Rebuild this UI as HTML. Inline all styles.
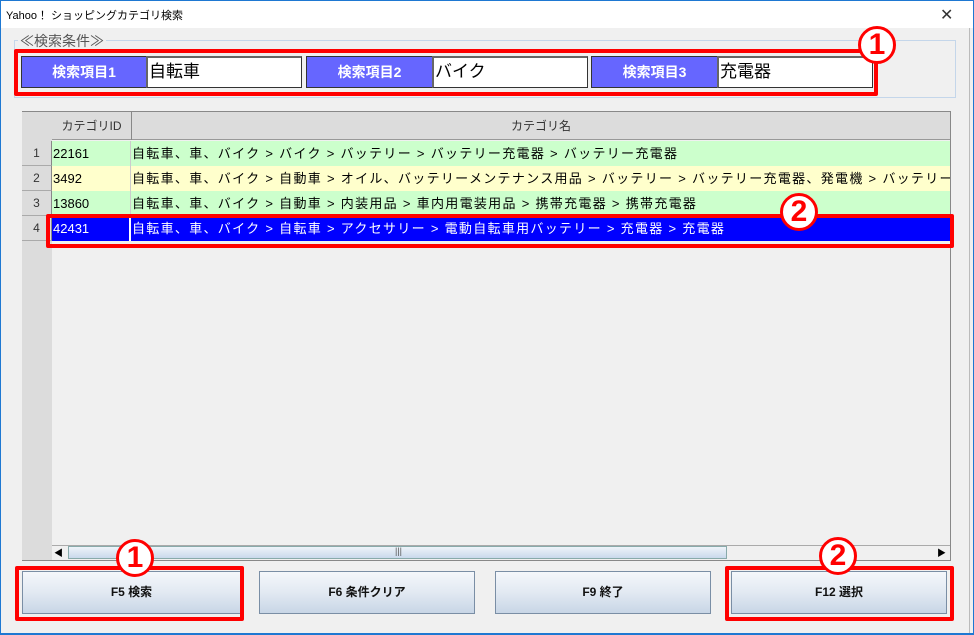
<!DOCTYPE html>
<html><head><meta charset="utf-8"><style>
*{margin:0;padding:0;box-sizing:border-box}
body{width:974px;height:635px;background:#f0f0f0;font-family:"Liberation Sans","Noto Sans CJK JP",sans-serif;position:relative;overflow:hidden}
.a{position:absolute}
.title{left:0;top:0;width:974px;height:28px;background:#fff;border-left:1px solid #1e78d2;border-right:1px solid #1e78d2;border-top:1px solid #1e78d2}
.lbl{background:#6666ff;color:#fff;font-weight:bold;font-size:14px;text-align:center;line-height:30px;border:1px solid #333;height:32px;top:56px}
.inp{background:#fff;border:1px solid #333;border-top:2px solid #666;border-left:2px solid #666;height:32px;top:56px;font-size:17px;line-height:28px;padding-left:1px}
.row{left:52px;width:898px;height:25px;font-size:13px;line-height:25px}
.rh{left:22px;width:30px;height:25px;background:#dcdcdc;border-bottom:1px solid #aaa;border-right:1px solid #888;text-align:center;font-size:12px;line-height:25px;color:#333}
.id{position:absolute;left:0;width:79px;padding-left:1px;border-right:1px solid #ccc;height:25px}
.nm{position:absolute;left:80px;white-space:nowrap;overflow:hidden;width:818px;letter-spacing:1.3px}
.btn{top:571px;height:43px;border:1px solid #7a8ea5;background:linear-gradient(#f4f7fb,#e2e9f2 50%,#c8d6e6);font-size:12px;font-weight:bold;text-align:center;line-height:41px;color:#111}
.red{border:4px solid #f00;border-radius:2px}
.c{width:38px;height:38px;border-radius:50%;background:#fff;border:3px solid #f00;color:#f00;font-weight:bold;font-size:30px;text-align:center;line-height:32px}
</style></head><body>
<div class="a title"></div>
<div class="a" style="left:6px;top:7px;font-size:11px">Yahoo！ ショッピングカテゴリ検索</div>
<div class="a" style="left:940px;top:5px;font-size:16px;color:#333;font-weight:lighter">✕</div>
<div class="a" style="left:0;top:28px;width:1px;height:607px;background:#1e78d2"></div>
<div class="a" style="left:973px;top:28px;width:1px;height:607px;background:#1e78d2"></div>
<div class="a" style="left:969px;top:28px;width:1px;height:605px;background:#bbb"></div>
<div class="a" style="left:0;top:633px;width:974px;height:2px;background:#1e78d2"></div>

<div class="a" style="left:14px;top:40px;width:942px;height:58px;border:1px solid #c4d6ea"></div>
<div class="a" style="left:18px;top:31px;font-size:14px;color:#555;background:#f0f0f0;padding:0 2px">≪検索条件≫</div>
<div class="a red" style="left:14px;top:49px;width:864px;height:47px"></div>
<div class="a lbl" style="left:21px;width:126px">検索項目1</div>
<div class="a inp" style="left:146px;width:156px">自転車</div>
<div class="a lbl" style="left:306px;width:127px">検索項目2</div>
<div class="a inp" style="left:432px;width:156px">バイク</div>
<div class="a lbl" style="left:591px;width:127px">検索項目3</div>
<div class="a inp" style="left:717px;width:156px">充電器</div>

<div class="a" style="left:22px;top:111px;width:929px;height:450px;border:1px solid #888;background:#f0f0f0"></div>
<div class="a" style="left:22px;top:112px;width:30px;height:448px;background:#dcdcdc"></div>
<div class="a" style="left:52px;top:112px;width:898px;height:28px;background:#dcdcdc;border-bottom:1px solid #999"></div>
<div class="a" style="left:52px;top:112px;width:80px;height:28px;border-right:1px solid #888;font-size:12px;line-height:28px;text-align:center;color:#333">カテゴリID</div>
<div class="a" style="left:132px;top:112px;width:818px;height:28px;font-size:12px;line-height:28px;text-align:center;color:#333">カテゴリ名</div>
<div class="a rh" style="top:141px">1</div>
<div class="a rh" style="top:166px">2</div>
<div class="a rh" style="top:191px">3</div>
<div class="a rh" style="top:216px">4</div>
<div class="a row" style="top:141px;background:#ccffcc"><span class="id">22161</span><span class="nm">自転車、車、バイク &gt; バイク &gt; バッテリー &gt; バッテリー充電器 &gt; バッテリー充電器</span></div>
<div class="a row" style="top:166px;background:#ffffcc"><span class="id">3492</span><span class="nm">自転車、車、バイク &gt; 自動車 &gt; オイル、バッテリーメンテナンス用品 &gt; バッテリー &gt; バッテリー充電器、発電機 &gt; バッテリー</span></div>
<div class="a row" style="top:191px;background:#ccffcc"><span class="id">13860</span><span class="nm">自転車、車、バイク &gt; 自動車 &gt; 内装用品 &gt; 車内用電装用品 &gt; 携帯充電器 &gt; 携帯充電器</span></div>
<div class="a row" style="top:216px;background:#0000ff;color:#fff"><span class="id" style="border-right:2px solid #fff">42431</span><span class="nm">自転車、車、バイク &gt; 自転車 &gt; アクセサリー &gt; 電動自転車用バッテリー &gt; 充電器 &gt; 充電器</span></div>
<div class="a red" style="left:46px;top:214px;width:908px;height:34px"></div>

<div class="a" style="left:52px;top:545px;width:898px;height:15px;background:#f0f0f0;border-top:1px solid #aaa"></div>
<div class="a" style="left:54px;top:546px;font-size:9px">◀</div>
<div class="a" style="left:68px;top:546px;width:659px;height:13px;border:1px solid #8aa;background:linear-gradient(#eef3f9,#c9d9ec)"></div>
<div class="a" style="left:395px;top:546px;font-size:9px;color:#555">|||</div>
<div class="a" style="left:937px;top:546px;font-size:9px">▶</div>

<div class="a btn" style="left:22px;width:219px">F5 検索</div>
<div class="a btn" style="left:259px;width:216px">F6 条件クリア</div>
<div class="a btn" style="left:495px;width:216px">F9 終了</div>
<div class="a btn" style="left:731px;width:216px">F12 選択</div>
<div class="a red" style="left:15px;top:566px;width:229px;height:55px"></div>
<div class="a red" style="left:725px;top:566px;width:229px;height:55px"></div>

<div class="a c" style="left:858px;top:26px">1</div>
<div class="a c" style="left:780px;top:193px">2</div>
<div class="a c" style="left:116px;top:539px">1</div>
<div class="a c" style="left:819px;top:537px">2</div>
</body></html>
